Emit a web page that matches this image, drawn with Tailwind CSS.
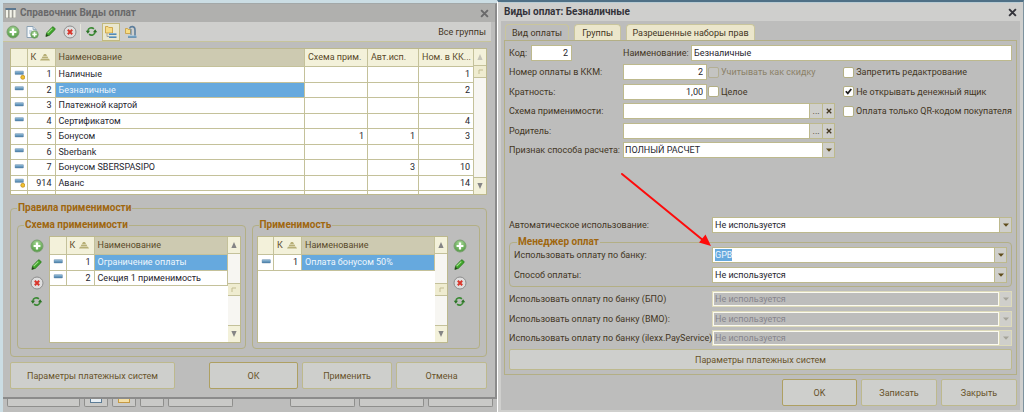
<!DOCTYPE html>
<html lang="ru">

<head>
    <meta charset="UTF-8" />
    <meta name="viewport" content="width=device-width, initial-scale=1.0" />
    <title>Справочник Виды оплат</title>
    <script src="https://cdn.jsdelivr.net/npm/@tailwindcss/browser@4"></script>
</head>

<body class="min-h-screen grid grid-cols-[497fr_527fr] bg-[#bdbdbc] font-[Roboto,sans-serif] text-[9px] leading-3 text-[#43361f]">

    <svg class="absolute w-0 h-0">
        <defs>
            <radialGradient id="g-green" cx="50%" cy="30%" r="70%">
                <stop offset="0" stop-color="#a9d99a" />
                <stop offset="1" stop-color="#4f9a3f" />
            </radialGradient>
            <linearGradient id="g-bar" x1="0" y1="0" x2="0" y2="1">
                <stop offset="0" stop-color="#9cc3de" />
                <stop offset="1" stop-color="#3f77a3" />
            </linearGradient>
        </defs>
        <symbol id="i-add" viewBox="0 0 14 14">
            <circle cx="7" cy="7" r="6" fill="url(#g-green)" stroke="#7c9f72" />
            <path d="M7 3.6v6.8M3.6 7h6.8" stroke="#fff" stroke-width="2.2" />
        </symbol>
        <symbol id="i-copy" viewBox="0 0 14 14">
            <path d="M2 1.5h6l3 3v8H2z" fill="#f4f8fb" stroke="#8aa0b3" />
            <path d="M8 1.5v3h3" fill="#cfdde8" stroke="#8aa0b3" stroke-width=".8" />
            <path d="M4 6h3M4 8h2" stroke="#9db4c6" />
            <circle cx="9.5" cy="9.5" r="3.8" fill="url(#g-green)" stroke="#7c9f72" stroke-width=".7" />
            <path d="M9.5 7.3v4.4M7.3 9.5h4.4" stroke="#fff" stroke-width="1.5" />
        </symbol>
        <symbol id="i-edit" viewBox="0 0 14 14">
            <path d="M2 12.3l.8-3.8 6-6.2c.5-.5 1-.5 1.6 0l1.3 1.3c.5.5.5 1 0 1.6l-6 6z" fill="#3fa52a" stroke="#26741b" stroke-width=".8" />
            <path d="M4 8.8l5-5" stroke="#a5e08d" stroke-width="1.2" />
            <path d="M2 12.3l.6-2.8 2.2 2.1z" fill="#2c3a22" />
        </symbol>
        <symbol id="i-del" viewBox="0 0 14 14">
            <circle cx="7" cy="7" r="6" fill="#dedede" stroke="#8d8d8d" />
            <path d="M4.8 4.8l4.4 4.4M9.2 4.8L4.8 9.2" stroke="#d8352b" stroke-width="2" />
        </symbol>
        <symbol id="i-refresh" viewBox="0 0 14 14">
            <path d="M3 6.5a4 4 0 0 1 6.6-2.4M11 7.5a4 4 0 0 1-6.6 2.4" fill="none" stroke="#3c8a35" stroke-width="1.7" />
            <path d="M.8 6.2h4.6L3.1 9.4zM13.2 7.8H8.6l2.3-3.2z" fill="#2c7427" />
        </symbol>
        <symbol id="i-folders" viewBox="0 0 14 14">
            <path d="M1.5 1.5h2.5l.8 1h3.7v5.5h-7z" fill="#f6dc86" stroke="#c79b3b" stroke-width=".8" />
            <path d="M3 8.5v3h2" fill="none" stroke="#8e8e8e" stroke-width=".7" />
            <rect x="5" y="8" width="7.5" height="2" fill="url(#g-bar)" />
            <rect x="5" y="11" width="7.5" height="2" fill="url(#g-bar)" />
        </symbol>
        <symbol id="i-move" viewBox="0 0 14 14">
            <path d="M1.5 3.5h2l.7 1h2.3v4h-5z" fill="#f6dc86" stroke="#c79b3b" stroke-width=".8" />
            <path d="M5.500 3.500C6.500 1 11 .5 11 5v6" fill="none" stroke="#5d7e9c" stroke-width="1.6" />
            <path d="M7 4v6" stroke="#5d7e9c" />
            <rect x="4" y="10.500" width="8.500" height="2.200" fill="url(#g-bar)" />
        </symbol>
        <symbol id="i-item" viewBox="0 0 11 11">
            <rect x="1" y="2.500" width="8.500" height="3.600" rx=".6" fill="url(#g-bar)" stroke="#7391a8" stroke-width=".4" />
        </symbol>
        <symbol id="i-item-dot" viewBox="0 0 11 11">
            <rect x="1" y="2" width="8.500" height="3.600" rx=".6" fill="url(#g-bar)" stroke="#7391a8" stroke-width=".4" />
            <circle cx="8.800" cy="8.300" r="2" fill="#f2c230" stroke="#b98613" stroke-width=".7" />
        </symbol>
        <symbol id="i-sort" viewBox="0 0 10 7">
            <path d="M4 0h2l1 2H3zM2.5 2.6h5l.8 1.600H1.700zM1 4.800h8l1 1.800H0z" fill="#b7af76" />
        </symbol>
        <symbol id="i-up" viewBox="0 0 6 6">
            <path d="M3 0l2.600 6H.4z" fill="#858585" />
        </symbol>
        <symbol id="i-down" viewBox="0 0 6 6">
            <path d="M3 6L.4 0h5.200z" fill="#858585" />
        </symbol>
        <symbol id="i-grip" viewBox="0 0 5 5">
            <path d="M1 5V1h4" fill="none" stroke="#c3bd92" />
        </symbol>
        <symbol id="i-drop" viewBox="0 0 6 4">
            <path d="M0 .5h6L3 3.800z" fill="currentColor" />
        </symbol>
        <symbol id="i-x" viewBox="0 0 8 8">
            <path d="M1 1l6 6M7 1L1 7" stroke="currentColor" stroke-width="1.700" />
        </symbol>
    </svg>

    <!-- Список видов оплат -->
    <section class="min-w-0 flex flex-col border-t-3 border-l-3 border-[#cbdde4]">
        <div class="flex-1 flex flex-col border-t border-r-2 border-b-2 border-t-[#a3a8a8] border-r-[#8b8b8b] border-b-[#8b8b8b]">
            <header class="flex items-center h-[18px] pl-[2px] pr-[6px] bg-[#b0b0ae] text-[#69696a]">
                <svg class="w-[11px] h-[10px] mr-1" viewBox="0 0 11 10">
                    <path d="M.5 0h3v10h-3zM4.200 0h3v10h-3zM8 0h3v10H8z" fill="#f3f3ea" stroke="#8a8a80" stroke-width=".6" />
                    <path d="M.5 0h10.500v2H.5z" fill="#5b7890" />
                </svg>
                <h1 class="flex-1 text-[10px] font-bold">Справочник Виды оплат</h1>
                <button aria-label="Закрыть окно"><svg class="w-[9px] h-[9px]"><use href="#i-x" /></svg></button>
            </header>
            <nav class="flex items-center h-5 mr-1 px-[3px] bg-[#cfcfcd] border-b border-[#c6c49b]">
                <button class="w-[19px]" aria-label="Добавить"><svg class="w-[14px] h-[14px]"><use href="#i-add" /></svg></button>
                <button class="w-[19px]" aria-label="Копировать"><svg class="w-[14px] h-[14px]"><use href="#i-copy" /></svg></button>
                <button class="w-[19px]" aria-label="Изменить"><svg class="w-[13px] h-[13px]"><use href="#i-edit" /></svg></button>
                <button class="w-[17px]" aria-label="Удалить"><svg class="w-[14px] h-[14px]"><use href="#i-del" /></svg></button>
                <span class="h-4 border-l border-[#e5e5dc]"></span>
                <button class="w-[21px] pl-1" aria-label="Обновить"><svg class="w-[13px] h-[13px]"><use href="#i-refresh" /></svg></button>
                <button class="w-[18px] h-[18px] mr-1 pl-px bg-[#e9e7cf] border border-[#c2b97f]" aria-label="По группам"><svg class="w-[14px] h-[14px]"><use href="#i-folders" /></svg></button>
                <button aria-label="Переместить"><svg class="w-[14px] h-[14px]"><use href="#i-move" /></svg></button>
                <span class="ml-auto pr-[2px]">Все группы</span>
            </nav>

            <main class="flex-1 flex flex-col bg-[#bdbdbc] pl-[7px] pr-2 pt-[6px]">
                <div class="flex h-[147px] border border-[#bdb98d] bg-white overflow-hidden">
                    <div class="flex-1 min-w-0 overflow-hidden">
                        <table class="w-full table-fixed text-[#26262e] [&_td]:border-r [&_td]:border-b [&_td]:border-[#c4c19a] [&_th]:border-r [&_th]:border-b [&_th]:border-[#c4c19a] [&_td]:px-[3px] [&_th]:px-[3px]">
                            <colgroup>
                                <col class="w-4" />
                                <col class="w-[28px]" />
                                <col />
                                <col class="w-[63px]" />
                                <col class="w-[51px]" />
                                <col class="w-[55px]" />
                            </colgroup>
                            <thead>
                                <tr class="h-[17px] bg-[#f3f1da] text-left text-[#5a4a2a] [&_th]:font-normal whitespace-nowrap">
                                    <th></th>
                                    <th><span class="flex items-center gap-1">К<svg class="w-[10px] h-[7px]"><use href="#i-sort" /></svg></span></th>
                                    <th class="bg-[#cdcab1]">Наименование</th>
                                    <th>Схема прим.</th>
                                    <th>Авт.исп.</th>
                                    <th>Ном. в КК...</th>
                                </tr>
                            </thead>
                            <tbody id="pay-body"></tbody>
                        </table>
                    </div>
                    <div class="w-[12px] flex flex-col items-center bg-[#f7f6f2]">
                        <span class="w-full h-[17px] flex items-center justify-center bg-[#f3f1da] border-b border-[#c4c19a]"><svg class="w-[6px] h-[6px] opacity-40"><use href="#i-up" /></svg></span>
                        <span class="w-full h-[12px] flex items-center justify-center bg-[#efecd0] border-b border-[#c4c19a]"><svg class="w-[5px] h-[5px]"><use href="#i-grip" /></svg></span>
                        <span class="w-full h-[17px] mt-auto flex items-center justify-center bg-[#f3f1da] border-t border-[#c4c19a]"><svg class="w-[6px] h-[6px]"><use href="#i-down" /></svg></span>
                    </div>
                </div>

                <fieldset class="mt-[7px] h-[155px] min-w-0 rounded-sm border border-[#b3af85] px-[6px] pt-[5px]">
                    <legend class="px-px text-[10px] font-bold text-[#a0670f]">Правила применимости</legend>
                    <div class="grid grid-cols-2 gap-[6px]">
                        <fieldset class="min-w-0 rounded-sm border border-[#b3af85] pl-3 pr-1 pt-[5px] pb-[5px]">
                            <legend class="-ml-[6px] px-px text-[10px] font-bold text-[#a0670f]">Схема применимости</legend>
                            <div class="flex gap-[5px]">
                                <div class="w-[14px] flex flex-col gap-[5px] pt-[3px]">
                                    <button aria-label="Добавить схему"><svg class="w-[14px] h-[14px]"><use href="#i-add" /></svg></button>
                                    <button aria-label="Изменить схему"><svg class="w-[13px] h-[13px]"><use href="#i-edit" /></svg></button>
                                    <button aria-label="Удалить схему"><svg class="w-[14px] h-[14px]"><use href="#i-del" /></svg></button>
                                    <button aria-label="Обновить схемы"><svg class="w-[13px] h-[13px]"><use href="#i-refresh" /></svg></button>
                                </div>
                                <div class="flex-1 min-w-0 flex h-[107px] border border-[#bdb98d] bg-white">
                                    <div class="flex-1 min-w-0">
                                        <table class="w-full table-fixed text-[#26262e] [&_td]:border-r [&_td]:border-b [&_td]:border-[#c4c19a] [&_th]:border-r [&_th]:border-b [&_th]:border-[#c4c19a] [&_td]:px-[3px] [&_th]:px-[3px]">
                                            <colgroup>
                                                <col class="w-4" />
                                                <col class="w-[28px]" />
                                                <col />
                                            </colgroup>
                                            <thead>
                                                <tr class="h-[17px] bg-[#f3f1da] text-left text-[#5a4a2a] [&_th]:font-normal">
                                                    <th></th>
                                                    <th><span class="flex items-center gap-1">К<svg class="w-[10px] h-[7px]"><use href="#i-sort" /></svg></span></th>
                                                    <th class="bg-[#cdcab1]">Наименование</th>
                                                </tr>
                                            </thead>
                                            <tbody id="scheme-body"></tbody>
                                        </table>
                                    </div>
                                    <div class="w-[12px] flex flex-col bg-[#f7f6f2]">
                                        <span class="h-[17px] flex items-center justify-center bg-[#f3f1da] border-b border-[#c4c19a]"><svg class="w-[6px] h-[6px]"><use href="#i-up" /></svg></span>
                                        <span class="h-[13px] mt-[29px] flex items-center justify-center bg-[#efecd0] border-y border-[#c4c19a]"><svg class="w-[5px] h-[5px]"><use href="#i-grip" /></svg></span>
                                        <span class="h-[17px] mt-auto flex items-center justify-center bg-[#f3f1da] border-t border-[#c4c19a]"><svg class="w-[6px] h-[6px]"><use href="#i-down" /></svg></span>
                                    </div>
                                </div>
                            </div>
                        </fieldset>
                        <fieldset class="min-w-0 rounded-sm border border-[#b3af85] pl-1 pr-3 pt-[5px] pb-1">
                            <legend class="ml-[2px] px-px text-[10px] font-bold text-[#a0670f]">Применимость</legend>
                            <div class="flex gap-[5px]">
                                <div class="flex-1 min-w-0 flex h-[107px] border border-[#bdb98d] bg-white">
                                    <div class="flex-1 min-w-0">
                                        <table class="w-full table-fixed text-[#26262e] [&_td]:border-r [&_td]:border-b [&_td]:border-[#c4c19a] [&_th]:border-r [&_th]:border-b [&_th]:border-[#c4c19a] [&_td]:px-[3px] [&_th]:px-[3px]">
                                            <colgroup>
                                                <col class="w-4" />
                                                <col class="w-[28px]" />
                                                <col />
                                            </colgroup>
                                            <thead>
                                                <tr class="h-[17px] bg-[#f3f1da] text-left text-[#5a4a2a] [&_th]:font-normal">
                                                    <th></th>
                                                    <th><span class="flex items-center gap-1">К<svg class="w-[10px] h-[7px]"><use href="#i-sort" /></svg></span></th>
                                                    <th class="bg-[#cdcab1]">Наименование</th>
                                                </tr>
                                            </thead>
                                            <tbody id="apply-body"></tbody>
                                        </table>
                                    </div>
                                    <div class="w-[12px] flex flex-col bg-[#f7f6f2]">
                                        <span class="h-[17px] flex items-center justify-center bg-[#f3f1da] border-b border-[#c4c19a]"><svg class="w-[6px] h-[6px]"><use href="#i-up" /></svg></span>
                                        <span class="h-[13px] mt-[29px] flex items-center justify-center bg-[#efecd0] border-y border-[#c4c19a]"><svg class="w-[5px] h-[5px]"><use href="#i-grip" /></svg></span>
                                        <span class="h-[17px] mt-auto flex items-center justify-center bg-[#f3f1da] border-t border-[#c4c19a]"><svg class="w-[6px] h-[6px]"><use href="#i-down" /></svg></span>
                                    </div>
                                </div>
                                <div class="w-[14px] flex flex-col gap-[5px] pt-[3px]">
                                    <button aria-label="Добавить применимость"><svg class="w-[14px] h-[14px]"><use href="#i-add" /></svg></button>
                                    <button aria-label="Изменить применимость"><svg class="w-[13px] h-[13px]"><use href="#i-edit" /></svg></button>
                                    <button aria-label="Удалить применимость"><svg class="w-[14px] h-[14px]"><use href="#i-del" /></svg></button>
                                    <button aria-label="Обновить применимость"><svg class="w-[13px] h-[13px]"><use href="#i-refresh" /></svg></button>
                                </div>
                            </div>
                        </fieldset>
                    </div>
                </fieldset>

                <div class="flex gap-1 mt-[5px] mb-2 text-[#68532a]">
                    <button class="w-[165px] h-[27px] mr-auto rounded-xs border border-[#bdb98d] bg-[#cecfcc]">Параметры платежных систем</button>
                    <button class="w-[89px] h-[27px] rounded-xs border border-[#aea062] bg-[#cecfcc]">ОК</button>
                    <button class="w-[90px] h-[27px] rounded-xs border border-[#bdb98d] bg-[#cecfcc]">Применить</button>
                    <button class="w-[91px] h-[27px] rounded-xs border border-[#bdb98d] bg-[#cecfcc]">Отмена</button>
                </div>
            </main>
        </div>
        <!-- Край окна под списком -->
        <div class="flex gap-1 h-[14px] pl-1 pr-1 bg-[#bdbdbc] *:h-2 *:rounded-b-xs *:border *:border-t-0 *:border-[#8f8f8d] *:bg-[#c9c9c7]">
            <span class="w-[73px]"></span>
            <span class="w-[24px] flex justify-center"><span class="w-3 h-1 border border-t-0 border-[#5c7c96] bg-[#e7eef3]"></span></span>
            <span class="w-[24px] flex justify-center"><span class="w-3 h-1 border border-t-0 border-[#c69a43] bg-[#f4dfa6]"></span></span>
            <span class="w-[24px]"></span>
            <span class="w-[65px] mr-auto"></span>
            <span class="w-[65px]"></span>
            <span class="w-[65px]"></span>
            <span class="w-[65px]"></span>
        </div>
    </section>

    <!-- Карточка вида оплаты -->
    <section class="relative min-w-0 flex flex-col border-t-2 border-l border-r border-t-[#4f7086] border-l-white border-r-[#7d929e] bg-[#cfcfcd] px-[3px] pb-[3px]">
        <header class="flex items-center h-[19px] px-[3px] border-t border-[#b9ccd4] text-[#33333a]">
            <h2 class="flex-1 text-[10px] font-bold">Виды оплат: Безналичные</h2>
            <button aria-label="Закрыть карточку"><svg class="w-[9px] h-[9px]"><use href="#i-x" /></svg></button>
        </header>
        <form class="flex-1 flex flex-col bg-[#bdbdbc] p-[3px]">
            <div class="flex gap-[5px] h-4 px-px *:rounded-t-sm *:border *:border-b-0 *:border-[#c9c59c]" role="tablist">
                <button type="button" role="tab" class="w-16 border-t-2 border-t-[#e9cf8d] bg-[#bdbdbc]">Вид оплаты</button>
                <button type="button" role="tab" class="w-[47px] bg-[#ebe6cb]">Группы</button>
                <button type="button" role="tab" class="w-[129px] bg-[#ebe6cb]">Разрешенные наборы прав</button>
            </div>

            <div class="h-[335px] flex flex-col border border-[#b3af85] p-1">
                <div class="h-[114px] flex flex-col justify-between">
                    <div class="flex items-center">
                        <label for="code" class="w-[22px]">Код:</label>
                        <input id="code" value="2" class="w-[41px] h-4 mr-[51px] px-[3px] border border-[#bdb98d] bg-white text-right text-[#26262e]" />
                        <label for="name" class="w-[68px]">Наименование:</label>
                        <input id="name" value="Безналичные" class="flex-1 min-w-0 h-4 px-[2px] border border-[#bdb98d] bg-white text-[#26262e]" />
                    </div>
                    <div class="grid grid-cols-[114px_6fr_5fr] items-center">
                        <label for="kkm">Номер оплаты в ККМ:</label>
                        <div class="flex items-center gap-px">
                            <input id="kkm" value="2" class="w-[84px] h-4 px-[3px] border border-[#bdb98d] bg-white text-right text-[#26262e]" />
                            <label class="flex items-center gap-[2px] text-[#8b8168] whitespace-nowrap"><input type="checkbox" disabled class="appearance-none w-[11px] h-[11px] rounded-xs border border-[#b3af95] bg-[#c4c4c2]" />Учитывать как скидку</label>
                        </div>
                        <label class="flex items-center gap-[2px] pl-2 whitespace-nowrap"><input type="checkbox" class="appearance-none w-[11px] h-[11px] rounded-xs border border-[#b3af85] bg-white" />Запретить редактрование</label>
                    </div>
                    <div class="grid grid-cols-[114px_6fr_5fr] items-center">
                        <label for="ratio">Кратность:</label>
                        <div class="flex items-center gap-px">
                            <input id="ratio" value="1,00" class="w-[84px] h-4 px-[3px] border border-[#bdb98d] bg-white text-right text-[#26262e]" />
                            <label class="flex items-center gap-[2px]"><input type="checkbox" class="appearance-none w-[11px] h-[11px] rounded-xs border border-[#b3af85] bg-white" />Целое</label>
                        </div>
                        <label class="flex items-center gap-[2px] pl-2 whitespace-nowrap">
                            <span class="grid *:[grid-area:1/1] place-items-center">
                                <input type="checkbox" checked class="appearance-none w-[11px] h-[11px] rounded-xs border border-[#b3af85] bg-white" />
                                <svg class="w-[7px] h-[7px] pointer-events-none" viewBox="0 0 7 7"><path d="M.8 3.200l2 2.200L6.300 1" fill="none" stroke="#1d1d1d" stroke-width="1.700" /></svg>
                            </span>Не открывать денежный ящик</label>
                    </div>
                    <div class="grid grid-cols-[114px_6fr_5fr] items-center">
                        <label for="scheme">Схема применимости:</label>
                        <div class="flex h-4 border border-[#bdb98d] bg-[#cfcfcb]">
                            <input id="scheme" class="flex-1 min-w-0 px-[2px] bg-white" />
                            <button type="button" class="w-[13px] border-l border-[#bdb98d]" aria-label="Выбрать схему">...</button>
                            <button type="button" class="w-[12px] flex items-center justify-center border-l border-[#bdb98d]" aria-label="Очистить схему"><svg class="w-[6px] h-[6px]"><use href="#i-x" /></svg></button>
                        </div>
                        <label class="flex items-center gap-[2px] pl-2 whitespace-nowrap"><input type="checkbox" class="appearance-none w-[11px] h-[11px] rounded-xs border border-[#b3af85] bg-white" />Оплата только QR-кодом покупателя</label>
                    </div>
                    <div class="grid grid-cols-[114px_6fr_5fr] items-center">
                        <label for="parent">Родитель:</label>
                        <div class="flex h-4 border border-[#bdb98d] bg-[#cfcfcb]">
                            <input id="parent" class="flex-1 min-w-0 px-[2px] bg-white" />
                            <button type="button" class="w-[13px] border-l border-[#bdb98d]" aria-label="Выбрать родителя">...</button>
                            <button type="button" class="w-[12px] flex items-center justify-center border-l border-[#bdb98d]" aria-label="Очистить родителя"><svg class="w-[6px] h-[6px]"><use href="#i-x" /></svg></button>
                        </div>
                    </div>
                    <div class="grid grid-cols-[114px_6fr_5fr] items-center">
                        <label for="sign" class="whitespace-nowrap">Признак способа расчета:</label>
                        <div class="flex h-4 border border-[#bdb98d] bg-[#cfcfcb]">
                            <select id="sign" class="appearance-none flex-1 min-w-0 px-px bg-white text-[#26262e]"><option>ПОЛНЫЙ РАСЧЕТ</option></select>
                            <span class="w-[12px] flex items-center justify-center border-l border-[#bdb98d] text-[#5f4c1c]"><svg class="w-[6px] h-1"><use href="#i-drop" /></svg></span>
                        </div>
                    </div>
                </div>

                <div class="grid grid-cols-[203px_1fr] items-center mt-[59px]">
                    <label for="auto">Автоматическое использование:</label>
                    <div class="flex h-4 border border-[#bdb98d] bg-[#cfcfcb]">
                        <select id="auto" class="appearance-none flex-1 min-w-0 px-[2px] bg-white text-[#26262e]"><option>Не используется</option></select>
                        <span class="w-[12px] flex items-center justify-center border-l border-[#bdb98d] text-[#5f4c1c]"><svg class="w-[6px] h-1"><use href="#i-drop" /></svg></span>
                    </div>
                </div>

                <fieldset class="mt-1 min-w-0 rounded-sm border border-[#b3af85] pl-1 pr-1 pb-[3px]">
                    <legend class="ml-[3px] px-px text-[10px] leading-[10px] font-bold text-[#a0670f]">Менеджер оплат</legend>
                    <div class="grid grid-cols-[198px_1fr] gap-y-1 items-center">
                        <label for="bank">Использовать оплату по банку:</label>
                        <div class="flex h-4 border border-[#bdb98d] bg-white">
                            <span class="flex-1 min-w-0 pl-[2px] flex items-center"><input id="bank" value="GPB" class="field-sizing-content h-3 bg-[#66a9de] text-[#eef6fc]" /></span>
                            <button type="button" class="w-[12px] flex items-center justify-center border-l border-[#bdb98d] bg-[#cfcfcb] text-[#5f4c1c]" aria-label="Список банков"><svg class="w-[6px] h-1"><use href="#i-drop" /></svg></button>
                        </div>
                        <label for="method">Способ оплаты:</label>
                        <div class="flex h-4 border border-[#bdb98d] bg-[#cfcfcb]">
                            <select id="method" class="appearance-none flex-1 min-w-0 px-[2px] bg-white text-[#26262e]"><option>Не используется</option></select>
                            <span class="w-[12px] flex items-center justify-center border-l border-[#bdb98d] text-[#5f4c1c]"><svg class="w-[6px] h-1"><use href="#i-drop" /></svg></span>
                        </div>
                    </div>
                </fieldset>

                <div class="h-[55px] mt-1 flex flex-col justify-between">
                    <div class="grid grid-cols-[203px_1fr] items-center">
                        <label for="bpo">Использовать оплату по банку (БПО)</label>
                        <div class="flex h-4 border border-[#dedbbb] bg-[#cfcfcb]">
                            <select id="bpo" disabled class="appearance-none opacity-100 flex-1 min-w-0 border border-[#fbfaf0] bg-[#bdbdbc] px-px text-[#87858c]"><option>Не используется</option></select>
                            <span class="w-[12px] flex items-center justify-center border-l border-[#dedbbb] text-[#a5a49a]"><svg class="w-[6px] h-1"><use href="#i-drop" /></svg></span>
                        </div>
                    </div>
                    <div class="grid grid-cols-[203px_1fr] items-center">
                        <label for="bmo">Использовать оплату по банку (ВМО):</label>
                        <div class="flex h-4 border border-[#dedbbb] bg-[#cfcfcb]">
                            <select id="bmo" disabled class="appearance-none opacity-100 flex-1 min-w-0 border border-[#fbfaf0] bg-[#bdbdbc] px-px text-[#87858c]"><option>Не используется</option></select>
                            <span class="w-[12px] flex items-center justify-center border-l border-[#dedbbb] text-[#a5a49a]"><svg class="w-[6px] h-1"><use href="#i-drop" /></svg></span>
                        </div>
                    </div>
                    <div class="grid grid-cols-[203px_1fr] items-center">
                        <label for="ilexx" class="whitespace-nowrap">Использовать оплату по банку (ilexx.PayService):</label>
                        <div class="flex h-4 border border-[#dedbbb] bg-[#cfcfcb]">
                            <select id="ilexx" disabled class="appearance-none opacity-100 flex-1 min-w-0 border border-[#fbfaf0] bg-[#bdbdbc] px-px text-[#87858c]"><option>Не используется</option></select>
                            <span class="w-[12px] flex items-center justify-center border-l border-[#dedbbb] text-[#a5a49a]"><svg class="w-[6px] h-1"><use href="#i-drop" /></svg></span>
                        </div>
                    </div>
                </div>
                <button type="button" class="h-[21px] mt-[3px] rounded-xs border border-[#bdb98d] bg-[#cecfcc] text-[#68532a]">Параметры платежных систем</button>
            </div>

            <div class="flex justify-end gap-1 mt-1 text-[#68532a]">
                <button type="button" class="w-[75px] h-[27px] rounded-xs border border-[#aea062] bg-[#cecfcc]">OK</button>
                <button type="button" class="w-[76px] h-[27px] rounded-xs border border-[#bdb98d] bg-[#cecfcc]">Записать</button>
                <button type="button" class="w-[76px] h-[27px] rounded-xs border border-[#bdb98d] bg-[#cecfcc]">Закрыть</button>
            </div>
        </form>

        <svg class="absolute left-[122px] top-[170px] w-[94px] h-[78px] pointer-events-none" viewBox="0 0 94 78">
            <path d="M2 2L84 69" stroke="#fe0b0b" stroke-width="2" stroke-linecap="round" />
            <path d="M91 74L79 70.500L85.500 62.500z" fill="#fe0b0b" />
        </svg>
    </section>

    <script>
        const payments = [
            { code: "1", name: "Наличные", num: "1", dot: true },
            { code: "2", name: "Безналичные", num: "2", active: true },
            { code: "3", name: "Платежной картой" },
            { code: "4", name: "Сертификатом", num: "4" },
            { code: "5", name: "Бонусом", scheme: "1", auto: "1", num: "3" },
            { code: "6", name: "Sberbank" },
            { code: "7", name: "Бонусом SBERSPASIPO", auto: "3", num: "10" },
            { code: "914", name: "Аванс", num: "14", dot: true },
            { code: "915", name: "Кредит", num: "15" }
        ];
        const schemes = [
            { code: "1", name: "Ограничение оплаты", active: true },
            { code: "2", name: "Секция 1 применимость" }
        ];
        const applies = [{ code: "1", name: "Оплата бонусом 50%", active: true }];

        const fillRows = (id, rows, extra = []) => {
            document.getElementById(id).innerHTML = rows.map(row => `
                <tr class="h-[15px] odd:h-[16px] whitespace-nowrap">
                    <td><svg class="w-[11px] h-[11px]"><use href="#${row.dot ? "i-item-dot" : "i-item"}" /></svg></td>
                    <td class="text-right">${row.code}</td>
                    <td class="${row.active ? "bg-[#66a9de] text-[#eef6fc]" : ""}">${row.name}</td>
                    ${extra.map(key => `<td class="text-right">${row[key] || ""}</td>`).join("")}
                </tr>`).join("");
        };

        fillRows("pay-body", payments, ["scheme", "auto", "num"]);
        fillRows("scheme-body", schemes);
        fillRows("apply-body", applies);
    </script>
</body>

</html>
